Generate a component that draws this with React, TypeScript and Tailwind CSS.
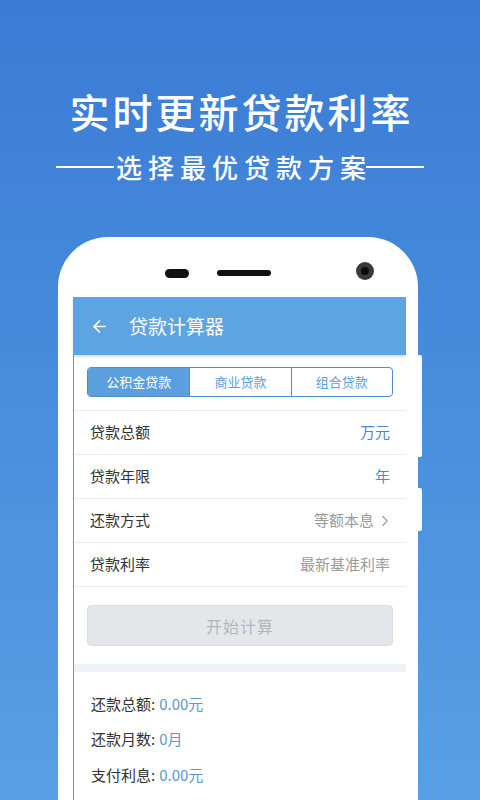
import { ArrowLeft, ChevronRight } from 'lucide-react';

const font = { fontFamily: '"Noto Sans CJK SC", "Noto Sans", sans-serif' };

const tabs = ['公积金贷款', '商业贷款', '组合贷款'];

const rows = [
  { label: '贷款总额', value: '万元', tone: 'text-[#4f88c2]' },
  { label: '贷款年限', value: '年', tone: 'text-[#4f88c2]' },
  { label: '还款方式', value: '等额本息', tone: 'text-[#9a9a9a]', arrow: true },
  { label: '贷款利率', value: '最新基准利率', tone: 'text-[#9a9a9a]' },
];

const results = [
  { label: '还款总额', value: '0.00元' },
  { label: '还款月数', value: '0月' },
  { label: '支付利息', value: '0.00元' },
];

export default function App() {
  return (
    <div
      className="w-[480px] h-[800px] overflow-hidden flex flex-col items-center bg-gradient-to-b from-[#3a7bd5] to-[#58a0e3]"
      style={font}
    >
      {/* Headline */}
      <h1 className="mt-[91px] text-[40px] leading-[40px] tracking-[3px] mr-[-3px] text-white font-medium">
        实时更新贷款利率
      </h1>
      <div className="mt-[23px] flex items-center">
        <span className="w-[58px] h-[1.5px] bg-white" />
        <span className="ml-[2px] mr-[-6px] text-[26px] leading-[26px] tracking-[6px] text-white font-medium">
          选择最优贷款方案
        </span>
        <span className="w-[58px] h-[1.5px] bg-white" />
      </div>

      {/* Phone */}
      <div className="relative self-start ml-[58px] mt-[57px] w-[360px] flex-1 bg-white rounded-t-[50px]">
        {/* side buttons */}
        <div className="absolute right-[-4px] top-[118px] w-[4px] h-[102px] bg-white rounded-r-[2px]" />
        <div className="absolute right-[-4px] top-[251px] w-[4px] h-[43px] bg-white rounded-r-[2px]" />

        {/* top bezel */}
        <div className="h-[60px] pt-[25px]">
          <div className="flex items-center h-[18px] pl-[107px]">
            <span className="mt-[4px] w-[24px] h-[9px] rounded-full bg-[#111]" />
            <span className="mt-[4px] ml-[28px] w-[54px] h-[6px] rounded-full bg-[#111]" />
            <span className="ml-[85px] w-[18px] h-[18px] rounded-full bg-[#3a3a3a] flex items-center justify-center">
              <span className="w-[8px] h-[8px] rounded-full bg-[#0c0c0c]" />
            </span>
          </div>
        </div>

        {/* Screen */}
        <div className="ml-[15px] w-[333px]">
          <div className="h-[58px] bg-[#5da4e2] flex items-center shadow-[0_2px_2px_rgba(0,0,0,0.12)] relative">
            <ArrowLeft className="ml-[17px] text-white" size={19} strokeWidth={2} />
            <span className="ml-[20px] text-[19px] text-white">贷款计算器</span>
          </div>

          <div className="border-l border-[#8f8f8f] bg-white">
            <div className="px-[13px] pt-[12px] pb-[13px] border-b border-[#ececec]">
              <div className="grid grid-cols-3 h-[30px] border border-[#4e8ccb] rounded-[4px] overflow-hidden">
                {tabs.map((t, i) => (
                  <div
                    key={t}
                    className={`flex items-center justify-center text-[13px] ${
                      i === 0 ? 'bg-[#5b9fdf] text-white' : 'text-[#5b9fdf] border-l border-[#4e8ccb]'
                    }`}
                  >
                    {t}
                  </div>
                ))}
              </div>
            </div>

            {rows.map((r) => (
              <div
                key={r.label}
                className="h-[44px] border-b border-[#ececec] flex items-center justify-between pl-[16px] pr-[16px]"
              >
                <span className="text-[15px] text-[#333]">{r.label}</span>
                <span className={`flex items-center text-[15px] ${r.tone}`}>
                  {r.value}
                  {r.arrow && <ChevronRight className="ml-[2px] mr-[-4px]" size={18} strokeWidth={1.5} />}
                </span>
              </div>
            ))}

            <div className="px-[13px] pt-[18px] pb-[18px]">
              <div className="h-[41px] rounded-[4px] bg-[#e4e7ea] border border-[#dadee2] flex items-center justify-center text-[16px] text-[#b2b6ba] tracking-[1px]">
                开始计算
              </div>
            </div>

            <div className="h-[8px] bg-[#eff3f8]" />

            <div className="pt-[14px] pb-[20px] pl-[17px]">
              {results.map((r) => (
                <div key={r.label} className="h-[35.5px] flex items-center text-[15px]">
                  <span className="text-[#333]">{r.label}:</span>
                  <span className="ml-[4px] text-[#5b98cc]">{r.value}</span>
                </div>
              ))}
            </div>
          </div>
        </div>
      </div>
    </div>
  );
}
